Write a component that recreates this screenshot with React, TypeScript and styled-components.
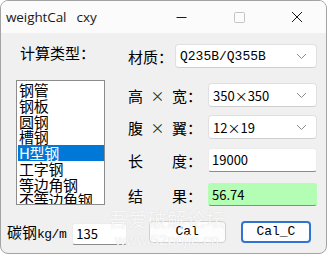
import React from "react";
import styled, { createGlobalStyle } from "styled-components";

const GlobalStyle = createGlobalStyle`
	html, body {
		margin: 0;
		padding: 0;
		background: #ffffff;
	}
`;

const types = ["钢管", "钢板", "圆钢", "槽钢", "H型钢", "工字钢", "等边角钢", "不等边角钢"];

const Chevron = () => (
	<svg width="11" height="7" viewBox="0 0 11 7">
		<polyline points="1,1 5.5,5.5 10,1" fill="none" stroke="#8a8a8a" strokeWidth="1" />
	</svg>
);

const Combo = ({ value, mono }: { value: string; mono?: boolean }) => (
	<ComboBox>
		<ComboText $mono={mono}>{value}</ComboText>
		<Chevron />
	</ComboBox>
);

const App = () => {
	return (
		<>
			<GlobalStyle />
			<Window>
				<TitleBar>
					<Title>weightCal&nbsp;&nbsp;&nbsp;cxy</Title>
					<Controls>
						<ControlButton>
							<svg width="11" height="11" viewBox="0 0 11 11">
								<line x1="0.5" y1="5.5" x2="10.5" y2="5.5" stroke="#1a1a1a" strokeWidth="1" />
							</svg>
						</ControlButton>
						<ControlButton>
							<svg width="11" height="11" viewBox="0 0 11 11">
								<rect x="0.5" y="0.5" width="10" height="10" rx="1" fill="none" stroke="#c4c4c4" strokeWidth="1" />
							</svg>
						</ControlButton>
						<ControlButton>
							<svg width="12" height="12" viewBox="0 0 12 12">
								<line x1="1" y1="1" x2="11" y2="11" stroke="#1a1a1a" strokeWidth="1" />
								<line x1="11" y1="1" x2="1" y2="11" stroke="#1a1a1a" strokeWidth="1" />
							</svg>
						</ControlButton>
					</Controls>
				</TitleBar>

				<Body>
					<Main>
						<LeftColumn>
							<Heading>计算类型：</Heading>
							<ListBox>
								{types.map((t) => (
									<ListItem key={t} $selected={t === "H型钢"}>
										{t}
									</ListItem>
								))}
							</ListBox>
						</LeftColumn>

						<RightColumn>
							<Row $gap={0}>
								<ShortLabel>材质：</ShortLabel>
								<WideField>
									<Combo value="Q235B/Q355B" mono />
								</WideField>
							</Row>
							<Row $gap={15}>
								<Label>
									<Char>高</Char>
									<Times>×</Times>
									<Char>宽</Char>
									<Colon>：</Colon>
								</Label>
								<Field>
									<Combo value="350×350" />
								</Field>
							</Row>
							<Row $gap={8}>
								<Label>
									<Char>腹</Char>
									<Times>×</Times>
									<Char>翼</Char>
									<Colon>：</Colon>
								</Label>
								<Field>
									<Combo value="12×19" />
								</Field>
							</Row>
							<Row $gap={9}>
								<Label>
									<Char>长</Char>
									<Times />
									<Char>度</Char>
									<Colon>：</Colon>
								</Label>
								<Field>
									<TextBox>19000</TextBox>
								</Field>
							</Row>
							<Row $gap={11}>
								<Label>
									<Char>结</Char>
									<Times />
									<Char>果</Char>
									<Colon>：</Colon>
								</Label>
								<Field>
									<TextBox $result>56.74</TextBox>
								</Field>
							</Row>
						</RightColumn>
					</Main>

					<BottomRow>
						<BottomLabel>
							碳钢<Mono>kg/m</Mono>
						</BottomLabel>
						<SmallBox>135</SmallBox>
						<Button $width={78}>Cal</Button>
						<Button $width={71} $primary>
							Cal_C
						</Button>
					</BottomRow>
				</Body>

				<Watermark>
					<WatermarkBig>吾爱破解论坛</WatermarkBig>
					<WatermarkSmall>www.52pojie.cn</WatermarkSmall>
				</Watermark>
			</Window>
		</>
	);
};

const Window = styled.div`
	position: relative;
	width: 327px;
	height: 254px;
	box-sizing: border-box;
	border: 1px solid #a3a3a3;
	border-radius: 8px;
	overflow: hidden;
	background: #f0f0f0;
	display: flex;
	flex-direction: column;
	font-family: "Noto Sans CJK SC", sans-serif;
	color: #000;
`;

const TitleBar = styled.div`
	height: 32px;
	flex: none;
	display: flex;
	align-items: center;
	background: #fbfbfb;
`;

const Title = styled.div`
	flex: 1;
	padding-left: 5px;
	font-family: "Open Sans", "Noto Sans", sans-serif;
	font-size: 13.5px;
	color: #1a1a1a;
	letter-spacing: -0.1px;
`;

const Controls = styled.div`
	display: flex;
	height: 100%;
`;

const ControlButton = styled.div`
	width: 58px;
	height: 100%;
	display: flex;
	align-items: center;
	justify-content: center;
`;

const Body = styled.div`
	flex: 1;
	display: flex;
	flex-direction: column;
`;

const Main = styled.div`
	display: flex;
`;

const LeftColumn = styled.div`
	padding: 10px 0 0 15px;
	width: 89px;
	flex: none;
`;

const Heading = styled.div`
	margin-left: 4px;
	height: 20px;
	line-height: 20px;
	font-size: 15px;
	white-space: nowrap;
`;

const ListBox = styled.div`
	margin-top: 17px;
	width: 89px;
	height: 125px;
	box-sizing: border-box;
	background: #fff;
	border: 1px solid #8c8c8c;
	padding: 1px 0 0 1px;
	overflow: hidden;
`;

const ListItem = styled.div<{ $selected?: boolean }>`
	height: 15.75px;
	line-height: 15.75px;
	font-size: 15px;
	padding-left: 1px;
	white-space: nowrap;
	letter-spacing: -0.3px;
	background: ${(p) => (p.$selected ? "#0078d7" : "transparent")};
	color: ${(p) => (p.$selected ? "#fff" : "#000")};
`;

const RightColumn = styled.div`
	margin-left: 23px;
	padding-top: 11px;
	display: flex;
	flex-direction: column;
`;

const Row = styled.div<{ $gap: number }>`
	margin-top: ${(p) => p.$gap}px;
	height: 24px;
	display: flex;
	align-items: center;
`;

const ShortLabel = styled.div`
	width: 47px;
	font-size: 15px;
	white-space: nowrap;
`;

const Label = styled.div`
	width: 80px;
	display: flex;
	align-items: center;
	font-size: 15px;
`;

const Char = styled.span`
	width: 15px;
`;

const Times = styled.span`
	width: 29px;
	text-align: center;
	color: #333;
	font-size: 14px;
`;

const Colon = styled.span`
	width: 14px;
`;

const WideField = styled.div`
	width: 142px;
	height: 24px;
`;

const Field = styled.div`
	width: 109px;
	height: 24px;
`;

const ComboBox = styled.div`
	height: 100%;
	box-sizing: border-box;
	background: #fff;
	border: 1px solid #e0e0e0;
	border-bottom-color: #cfcfcf;
	border-radius: 4px;
	display: flex;
	align-items: center;
	justify-content: space-between;
	padding: 0 9px 0 4px;
`;

const ComboText = styled.span<{ $mono?: boolean }>`
	font-family: ${(p) => (p.$mono ? '"Liberation Mono", monospace' : '"Noto Sans CJK SC", sans-serif')};
	font-size: 13px;
	color: #000;
`;

const TextBox = styled.div<{ $result?: boolean }>`
	height: ${(p) => (p.$result ? 23 : 24)}px;
	box-sizing: border-box;
	background: ${(p) => (p.$result ? "#b4fdb4" : "#fff")};
	border: 1px solid ${(p) => (p.$result ? "#b4fdb4" : "#ececec")};
	border-bottom: 1px solid #8a8a8a;
	border-radius: 3px;
	padding-left: 3px;
	font-size: 13px;
	line-height: 21px;
`;

const BottomRow = styled.div`
	margin-top: 12px;
	padding-left: 6px;
	display: flex;
	align-items: center;
	height: 25px;
`;

const BottomLabel = styled.div`
	width: 66px;
	font-size: 15px;
	white-space: nowrap;
`;

const Mono = styled.span`
	font-family: "Liberation Mono", monospace;
	font-size: 13px;
	letter-spacing: -0.5px;
`;

const SmallBox = styled.div`
	width: 55px;
	height: 22px;
	margin-top: 4px;
	box-sizing: border-box;
	background: #fff;
	border: 1px solid #ececec;
	border-bottom: 1px solid #8a8a8a;
	border-radius: 3px;
	padding-left: 3px;
	font-size: 13px;
	line-height: 19px;
	margin-right: 22px;
`;

const Button = styled.div<{ $width: number; $primary?: boolean }>`
	width: ${(p) => p.$width}px;
	height: 22px;
	margin-right: 15px;
	box-sizing: border-box;
	background: #fdfdfd;
	border: ${(p) => (p.$primary ? "2px solid #2f74d0" : "1px solid #d0d0d0")};
	border-radius: 4px;
	display: flex;
	align-items: center;
	justify-content: center;
	font-family: "Liberation Mono", monospace;
	font-size: 13px;
`;

const Watermark = styled.div`
	position: absolute;
	left: 104px;
	top: 205px;
	width: 124px;
	display: flex;
	flex-direction: column;
	align-items: center;
	pointer-events: none;
	color: rgba(255, 255, 255, 0.85);
	text-shadow: 0 0 1px rgba(150, 150, 150, 0.35);
`;

const WatermarkBig = styled.div`
	font-size: 19px;
	line-height: 25px;
	letter-spacing: 0.5px;
`;

const WatermarkSmall = styled.div`
	font-family: "Liberation Sans", sans-serif;
	font-size: 15px;
	line-height: 18px;
`;

export default App;
